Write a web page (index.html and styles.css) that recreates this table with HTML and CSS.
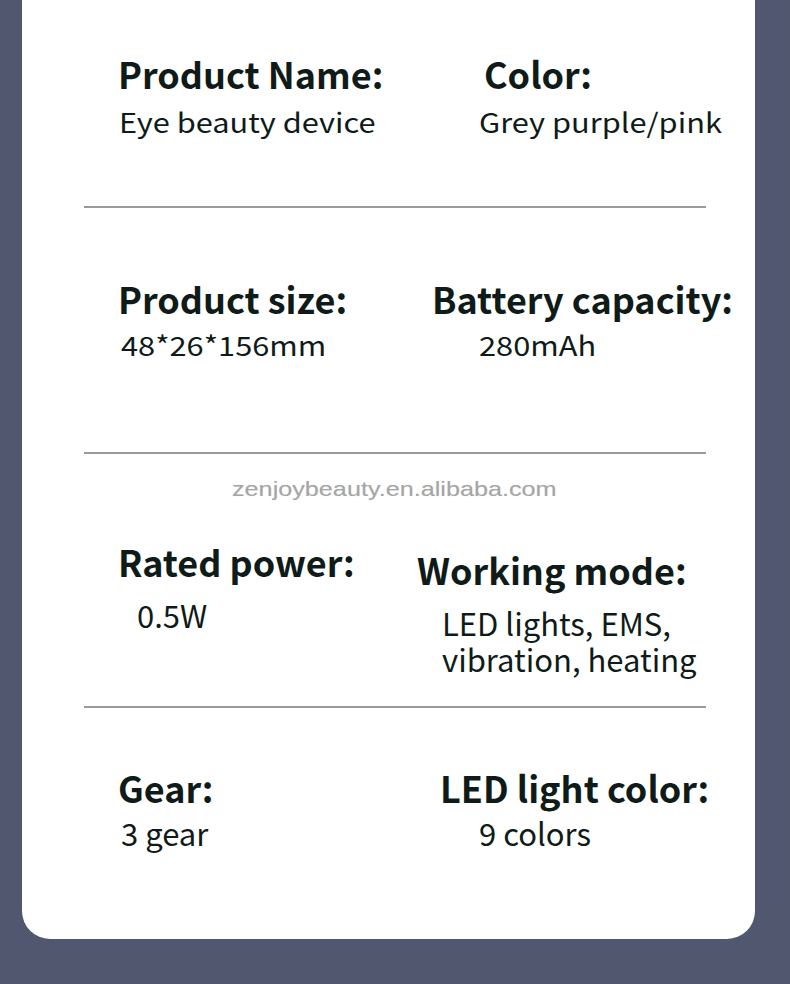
FILE: index.html
```html
<!DOCTYPE html>
<html lang="en">
<head>
<meta charset="utf-8">
<title>Product specifications</title>
<link rel="stylesheet" href="styles.css">
</head>
<body>
<main class="card">
  <section class="row r1">
    <div class="cell">
      <h2 class="label l-119">Product Name:</h2>
      <p class="value wide gap11 v-120">Eye beauty device</p>
    </div>
    <div class="cell">
      <h2 class="label r-485">Color:</h2>
      <p class="value wide gap11 r-480">Grey purple/pink</p>
    </div>
  </section>
  <div class="rule"></div>
  <section class="row r2">
    <div class="cell">
      <h2 class="label l-119">Product size:</h2>
      <p class="value wide gap9 v-122">48*26*156mm</p>
    </div>
    <div class="cell">
      <h2 class="label r-433">Battery capacity:</h2>
      <p class="value wide gap9 r-480">280mAh</p>
    </div>
  </section>
  <div class="rule"></div>
  <p class="watermark"><span class="mark">zenjoybeauty.en.alibaba.com</span></p>
  <section class="row r3">
    <div class="cell">
      <h2 class="label l-119">Rated power:</h2>
      <p class="value gap16 v-138">0.5W</p>
    </div>
    <div class="cell down8">
      <h2 class="label r-418">Working mode:</h2>
      <p class="value gap16 r-443">LED lights, EMS,<br>vibration, heating</p>
    </div>
  </section>
  <div class="rule"></div>
  <section class="row r4">
    <div class="cell">
      <h2 class="label l-119">Gear:</h2>
      <p class="value gap8 v-122">3 gear</p>
    </div>
    <div class="cell">
      <h2 class="label r-441">LED light color:</h2>
      <p class="value gap8 r-480">9 colors</p>
    </div>
  </section>
</main>
</body>
</html>
```
FILE: styles.css
```css
* { box-sizing: border-box; }
html, body { margin: 0; padding: 0; }
body {
  background: #525770;
  width: 790px;
  height: 984px;
  overflow: hidden;
  font-family: "Noto Sans CJK SC", "Noto Sans", sans-serif;
  color: #0f1b18;
}
.card {
  margin-left: 22px;
  width: 733px;
  height: 939px;
  background: #ffffff;
  border-radius: 0 0 28px 28px;
}
.row {
  display: grid;
  grid-template-columns: 396px 1fr;
}
.r1 { height: 206px; padding-top: 53px; }
.r2 { height: 244px; padding-top: 70px; }
.r3 { height: 205px; padding-top: 40px; }
.r4 { height: 231px; padding-top: 59px; }
.cell { display: flex; flex-direction: column; align-items: flex-start; }
.label {
  margin: 0;
  font-size: 36px;
  line-height: 40px;
  font-weight: 700;
  white-space: nowrap;
}
.value {
  margin: 0;
  font-size: 31px;
  line-height: 36px;
  font-weight: 400;
  white-space: nowrap;
}
.value.wide {
  font-size: 27px;
  transform: scaleX(1.14);
  transform-origin: left center;
}
.gap8 { margin-top: 8px; }
.gap9 { margin-top: 9px; }
.gap11 { margin-top: 11px; }
.gap16 { margin-top: 16px; }
.rule {
  height: 2px;
  margin: 0 49px 0 62px;
  background: #9a9a9a;
}
.watermark {
  margin: 23px 0 0;
  height: 24px;
  padding-left: 210px;
  font-family: "Liberation Sans", Arial, sans-serif;
  font-size: 21px;
  line-height: 24px;
  color: #a6a6a6;
}
.mark {
  display: inline-block;
  transform: scaleX(1.2);
  transform-origin: left center;
  text-shadow: 0 0 1px rgba(0, 0, 0, 0.15);
}
.l-119 { margin-left: 96px; }
.v-120 { margin-left: 97px; }
.v-122 { margin-left: 99px; }
.v-138 { margin-left: 115px; }
.r-418 { margin-left: -1px; }
.r-433 { margin-left: 14px; }
.r-441 { margin-left: 22px; }
.r-443 { margin-left: 24px; }
.r-480 { margin-left: 61px; }
.r-485 { margin-left: 66px; }
.down8 { padding-top: 8px; }
```
